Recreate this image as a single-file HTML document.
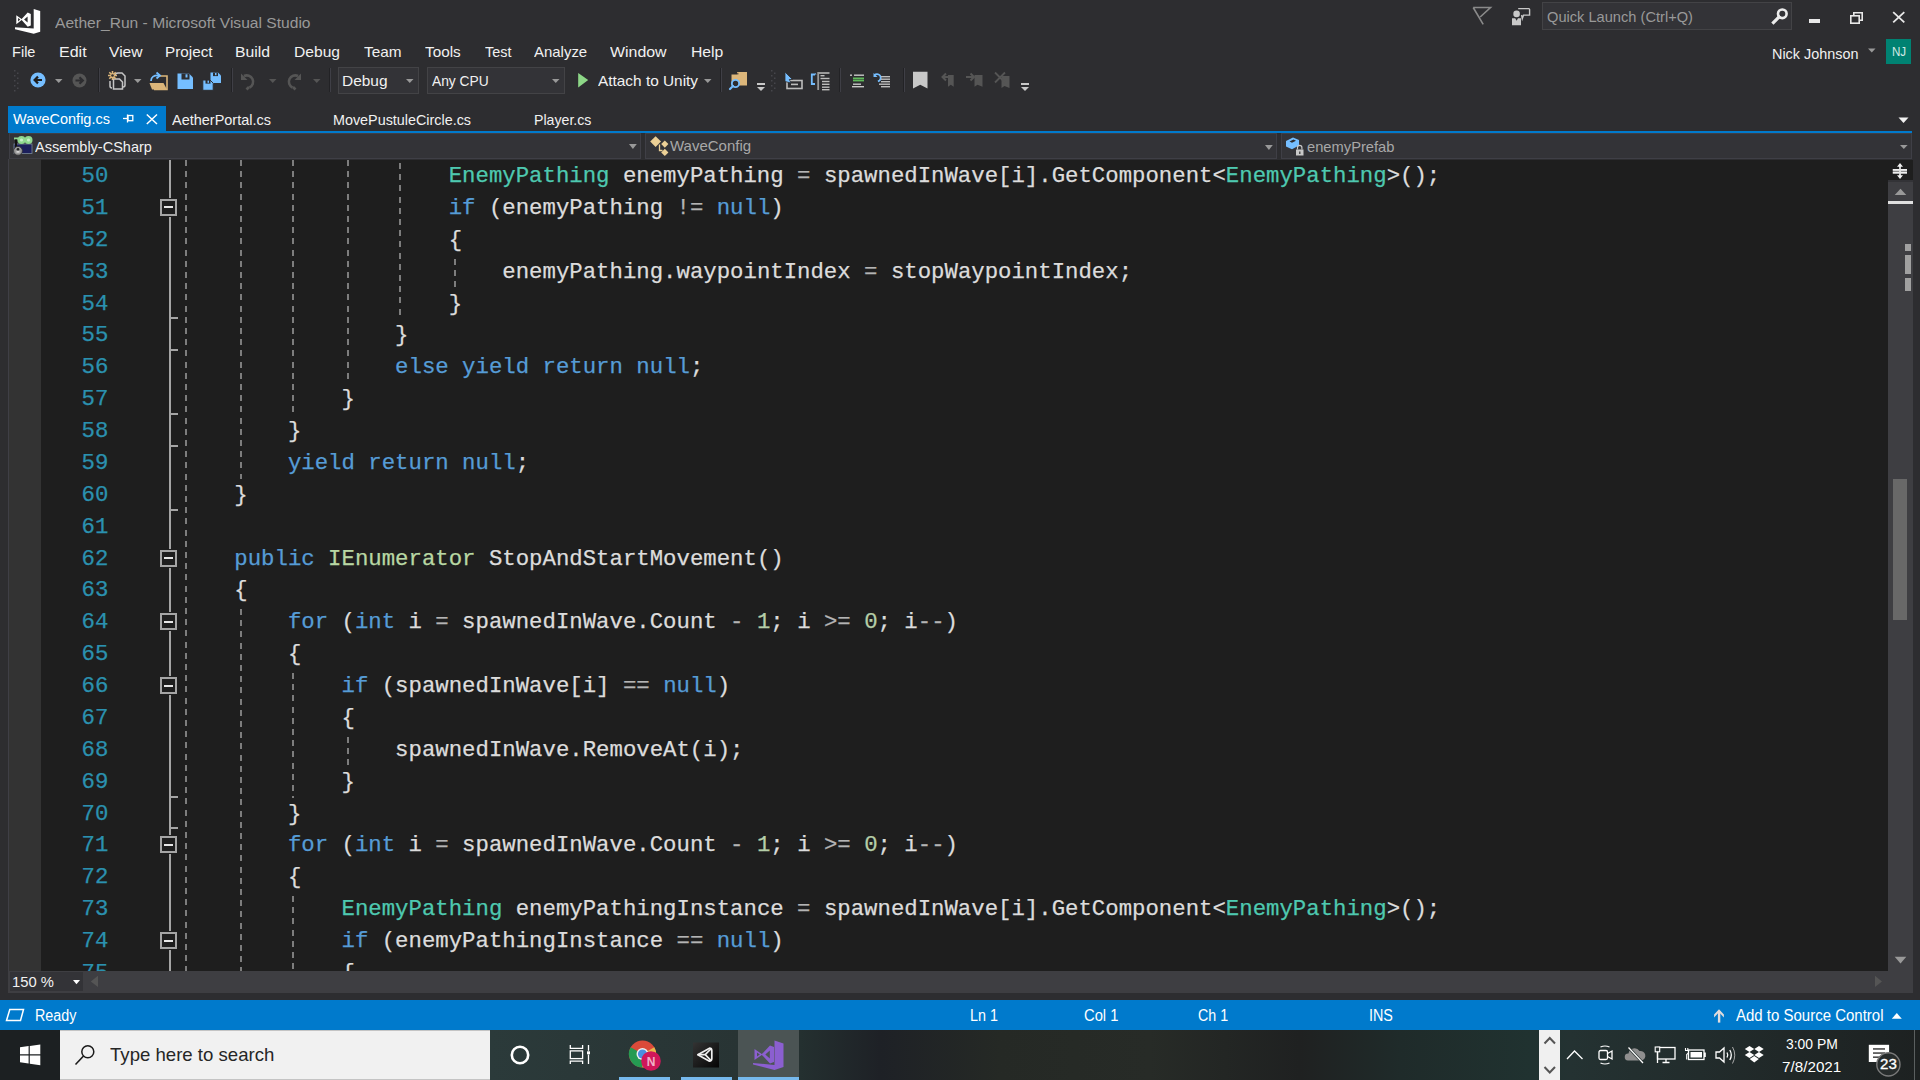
<!DOCTYPE html>
<html><head><meta charset="utf-8"><style>
*{margin:0;padding:0;box-sizing:border-box}
html,body{width:1920px;height:1080px;overflow:hidden;background:#2d2d30;font-family:"Liberation Sans",sans-serif;color:#f1f1f1}
.a{position:absolute}
.t{position:absolute;white-space:pre;line-height:1;transform-origin:0 0}
svg{position:absolute;overflow:visible}
#code{left:41px;top:160px;width:1847px;height:811px;background:#1e1e1e;overflow:hidden}
.ln,.cl{position:absolute;font-family:"Liberation Mono",monospace;font-size:22.33px;letter-spacing:0px;line-height:31.875px;height:31.875px;white-space:pre}
.ln{left:0;width:67.3px;text-align:right;color:#2b91af}
.cl{color:#dcdcdc}
.ln,.cl{-webkit-text-stroke:0.25px currentColor}
.k{color:#569cd6}.ty{color:#4ec9b0}.if{color:#b8d7a3}.n{color:#b5cea8}.o{color:#b4b4b4}
.g{position:absolute;width:2px;background:repeating-linear-gradient(to bottom,#7d7d7d 0,#7d7d7d 6px,transparent 6px,transparent 11.2px)}
.ol{position:absolute;left:128px;width:2px;background:#a5a5a5}
.box{position:absolute;left:119px;width:17px;height:17px;border:2px solid #a5a5a5;background:#1e1e1e;box-shadow:0 0 0 1px #1e1e1e}
.box:after{content:"";position:absolute;left:2px;top:5.5px;width:9px;height:2px;background:#e6e6e6}
.tick{position:absolute;left:128px;width:9px;height:2px;background:#a5a5a5}
</style></head>
<body>
<svg style="left:10px;top:4px" width="32" height="32" viewBox="0 0 32 32"><g fill="#fff" fill-rule="evenodd"><path d="M23.7 5 L30.2 7 L30.2 27.7 L23.7 29.8 L5 25.2 L5 23.3 L23.7 24.6 Z"/><path d="M6.3 11.3 L12.3 15.5 L6.3 20.2 Z M8.1 13.9 L10.2 15.6 L8.1 17.4 Z"/><path d="M11.2 15.5 L17.7 8.6 L20.8 9.9 L20.8 21.4 L17.7 22.8 Z M14.1 15.6 L17.6 12.6 L17.6 18.6 Z"/></g></svg>
<div class="t" style="left:54.57px;top:14.88px;font-size:15.5px;color:#999999;transform:scaleX(1.0066);">Aether_Run - Microsoft Visual Studio</div>
<svg style="left:1470px;top:4px" width="24" height="24" viewBox="0 0 24 24"><path d="M3.2 3.5 H20.5 L10.2 13 M3.2 3.5 L13.2 20.4" fill="none" stroke="#8a8a8a" stroke-width="1.6" stroke-linejoin="miter"/></svg>
<svg style="left:1508px;top:4px" width="26" height="24" viewBox="0 0 26 24"><path d="M10.2 4.6 H20.8 Q21.6 4.6 21.6 5.4 V11.1 H15.6 L14.3 14.6 L13.6 11" fill="none" stroke="#c8c8c8" stroke-width="1.4"/><circle cx="8.6" cy="9.9" r="3.3" fill="#c8c8c8"/><path d="M4 14.3 H7.2 L8.6 16.8 L10 14.3 H13 V21.3 H4 Z" fill="#c8c8c8"/></svg>
<div class="a" style="left:1542px;top:2px;width:250px;height:28px;background:#333337;border:1px solid #434346"></div>
<div class="t" style="left:1547.13px;top:10.23px;font-size:14.5px;color:#999999;transform:scaleX(1.0090);">Quick Launch (Ctrl+Q)</div>
<svg style="left:1770px;top:7px" width="20" height="18" viewBox="0 0 20 18"><circle cx="12.3" cy="6.8" r="4.3" fill="none" stroke="#ececec" stroke-width="2.6"/><path d="M9 10 L3.5 15.5" stroke="#ececec" stroke-width="3.2" stroke-linecap="square"/></svg>
<div class="a" style="left:1809px;top:19px;width:11px;height:4px;background:#e8e8e8;"></div>
<svg style="left:1848px;top:10px" width="18" height="16" viewBox="0 0 18 16"><rect x="2.8" y="5.8" width="8.4" height="7.4" fill="none" stroke="#e8e8e8" stroke-width="1.6"/><path d="M5.8 5.8 V2.8 H14.2 V10.2 H11.2" fill="none" stroke="#e8e8e8" stroke-width="1.6"/></svg>
<svg style="left:1890px;top:10px" width="18" height="16" viewBox="0 0 18 16"><path d="M3.2 2.2 L14.3 12.3 M14.3 2.2 L3.2 12.3" stroke="#e8e8e8" stroke-width="1.8"/></svg>
<div class="t" style="left:1771.61px;top:46.67px;font-size:14.8px;color:#f1f1f1;transform:scaleX(0.9731);">Nick Johnson</div>
<svg style="left:1866px;top:47px" width="12" height="8" viewBox="0 0 12 8"><path d="M2 1.5 H9.5 L5.75 5.5 Z" fill="#999"/></svg>
<div class="a" style="left:1886px;top:39px;width:25px;height:25px;background:#008272;"></div>
<div class="t" style="left:1891.55px;top:45.62px;font-size:12.5px;color:#d4ebe6;transform:scaleX(0.9265);">NJ</div>
<div class="t" style="left:11.60px;top:44.10px;font-size:15px;color:#f1f1f1;transform:scaleX(0.9704);">File</div>
<div class="t" style="left:59.10px;top:44.10px;font-size:15px;color:#f1f1f1;transform:scaleX(1.0674);">Edit</div>
<div class="t" style="left:109.10px;top:44.10px;font-size:15px;color:#f1f1f1;transform:scaleX(1.0407);">View</div>
<div class="t" style="left:165.10px;top:44.10px;font-size:15px;color:#f1f1f1;transform:scaleX(1.0180);">Project</div>
<div class="t" style="left:235.10px;top:44.10px;font-size:15px;color:#f1f1f1;transform:scaleX(1.0515);">Build</div>
<div class="t" style="left:294.10px;top:44.10px;font-size:15px;color:#f1f1f1;transform:scaleX(1.0421);">Debug</div>
<div class="t" style="left:364.10px;top:44.10px;font-size:15px;color:#f1f1f1;transform:scaleX(1.0231);">Team</div>
<div class="t" style="left:424.90px;top:44.10px;font-size:15px;color:#f1f1f1;transform:scaleX(1.0199);">Tools</div>
<div class="t" style="left:484.90px;top:44.10px;font-size:15px;color:#f1f1f1;transform:scaleX(0.9610);">Test</div>
<div class="t" style="left:534.10px;top:44.10px;font-size:15px;color:#f1f1f1;transform:scaleX(0.9966);">Analyze</div>
<div class="t" style="left:609.90px;top:44.10px;font-size:15px;color:#f1f1f1;transform:scaleX(1.0606);">Window</div>
<div class="t" style="left:690.80px;top:44.10px;font-size:15px;color:#f1f1f1;transform:scaleX(1.0491);">Help</div>
<svg style="left:14px;top:69.5px" width="6" height="23" viewBox="0 0 6 23"><rect x="0" y="0.0" width="1.5" height="1.5" fill="#46464b"/><rect x="3" y="2.5" width="1.5" height="1.5" fill="#46464b"/><rect x="0" y="5.0" width="1.5" height="1.5" fill="#46464b"/><rect x="3" y="7.5" width="1.5" height="1.5" fill="#46464b"/><rect x="0" y="10.0" width="1.5" height="1.5" fill="#46464b"/><rect x="3" y="12.5" width="1.5" height="1.5" fill="#46464b"/><rect x="0" y="15.0" width="1.5" height="1.5" fill="#46464b"/><rect x="3" y="17.5" width="1.5" height="1.5" fill="#46464b"/><rect x="0" y="20.0" width="1.5" height="1.5" fill="#46464b"/></svg>
<svg style="left:30px;top:72px" width="16" height="16" viewBox="0 0 16 16"><circle cx="8" cy="8" r="7.6" fill="#75beff"/><path d="M12 8 H5 M8 4.6 L4.6 8 L8 11.4" fill="none" stroke="#1e1e1e" stroke-width="2.2"/></svg>
<svg style="left:55px;top:79px" width="8.5" height="5" viewBox="0 0 8.5 5"><path d="M0 0 H7.5 L3.75 4 Z" fill="#999999"/></svg>
<svg style="left:71.5px;top:72.5px" width="16" height="16" viewBox="0 0 16 16"><circle cx="7.5" cy="7.5" r="7" fill="#555555"/><path d="M3.5 7.5 H10.5 M7.5 4.3 L10.8 7.5 L7.5 10.7" fill="none" stroke="#2d2d30" stroke-width="2.2"/></svg>
<div class="a" style="left:98px;top:68px;width:1px;height:24px;background:#222225;"></div><div class="a" style="left:99px;top:68px;width:1px;height:24px;background:#3f3f46;"></div>
<svg style="left:106px;top:70px" width="22" height="21" viewBox="0 0 22 21"><path d="M9 6 a3 3 0 0 1 3 -3 h4 l3 3 v9 a2 2 0 0 1 -2 2" fill="none" stroke="#c5c5c5" stroke-width="1.5"/><path d="M7.5 9 h6 l3 3 v7 h-9 z" fill="#2d2d30" stroke="#c5c5c5" stroke-width="1.5"/><path d="M4 11 v5 a2 2 0 0 0 2 2" fill="none" stroke="#c5c5c5" stroke-width="1.5"/><g stroke="#dcb67a" stroke-width="1.6"><path d="M6.5 1 V10 M2 5.5 H11 M3.3 2.3 L9.7 8.7 M9.7 2.3 L3.3 8.7"/></g><circle cx="6.5" cy="5.5" r="1.3" fill="#2d2d30"/></svg>
<svg style="left:134px;top:79px" width="8.5" height="5" viewBox="0 0 8.5 5"><path d="M0 0 H7.5 L3.75 4 Z" fill="#999999"/></svg>
<svg style="left:148px;top:70px" width="21" height="22" viewBox="0 0 21 22"><path d="M11 6 h8 v13.5 h-13" fill="none" stroke="#dcb67a" stroke-width="1.6"/><path d="M1.5 13 h14 l3.5 6.5 h-15 z" fill="#dcb67a"/><path d="M3 11 q0 -6 8 -5.5" fill="none" stroke="#75beff" stroke-width="1.8"/><path d="M8.5 2.5 L12 5.5 L8.5 8.5" fill="none" stroke="#75beff" stroke-width="1.8"/></svg>
<svg style="left:176.5px;top:72.5px" width="17" height="17" viewBox="0 0 17 17"><path d="M0.5 0.5 H12 L16 4.5 V16 H0.5 Z" fill="#75beff"/><rect x="4.5" y="0.5" width="8" height="6" fill="#2d2d30"/><rect x="8.5" y="1.3" width="2" height="3.2" fill="#75beff"/></svg>
<svg style="left:202px;top:71.5px" width="20" height="19" viewBox="0 0 20 19"><path d="M8.5 0.5 H16 L19 3.5 V11 H8.5 Z" fill="#75beff"/><rect x="11" y="0.5" width="5" height="3.6" fill="#2d2d30"/><rect x="13" y="1" width="1.5" height="2.2" fill="#75beff"/><path d="M0.8 8 H8 L11.2 11.2 V18.3 H0.8 Z" fill="#75beff" stroke="#2d2d30" stroke-width="1"/><rect x="3.5" y="8" width="5" height="3.6" fill="#2d2d30"/><rect x="5.5" y="8.6" width="1.5" height="2.2" fill="#75beff"/></svg>
<div class="a" style="left:231px;top:68px;width:1px;height:24px;background:#222225;"></div><div class="a" style="left:232px;top:68px;width:1px;height:24px;background:#3f3f46;"></div>
<svg style="left:240px;top:70px" width="18" height="20" viewBox="0 0 18 20"><path d="M4 6 A6.3 6.3 0 1 1 9.5 17.5" fill="none" stroke="#555555" stroke-width="2.6"/><path d="M1 3.5 V10 H7.5 Z" fill="#555555"/><path d="M9 17 L6.5 19.5" stroke="#555555" stroke-width="2.6"/></svg>
<svg style="left:269px;top:79px" width="8.5" height="5" viewBox="0 0 8.5 5"><path d="M0 0 H7.5 L3.75 4 Z" fill="#555555"/></svg>
<svg style="left:284px;top:70px" width="18" height="20" viewBox="0 0 18 20"><path d="M14 6 A6.3 6.3 0 1 0 8.5 17.5" fill="none" stroke="#555555" stroke-width="2.6"/><path d="M17 3.5 V10 H10.5 Z" fill="#555555"/><path d="M9 17 L11.5 19.5" stroke="#555555" stroke-width="2.6"/></svg>
<svg style="left:313px;top:79px" width="8.5" height="5" viewBox="0 0 8.5 5"><path d="M0 0 H7.5 L3.75 4 Z" fill="#555555"/></svg>
<div class="a" style="left:329px;top:68px;width:1px;height:24px;background:#222225;"></div><div class="a" style="left:330px;top:68px;width:1px;height:24px;background:#3f3f46;"></div>
<div class="a" style="left:338px;top:67px;width:81px;height:27px;background:#333337;border:1px solid #434346"></div>
<div class="t" style="left:342.10px;top:73.05px;font-size:15px;color:#f1f1f1;transform:scaleX(1.0304);">Debug</div>
<svg style="left:406px;top:79px" width="8.5" height="5" viewBox="0 0 8.5 5"><path d="M0 0 H7.5 L3.75 4 Z" fill="#999999"/></svg>
<div class="a" style="left:427px;top:67px;width:138px;height:27px;background:#333337;border:1px solid #434346"></div>
<div class="t" style="left:431.50px;top:73.10px;font-size:15px;color:#f1f1f1;transform:scaleX(0.9188);">Any CPU</div>
<svg style="left:552px;top:79px" width="8.5" height="5" viewBox="0 0 8.5 5"><path d="M0 0 H7.5 L3.75 4 Z" fill="#999999"/></svg>
<svg style="left:577px;top:72px" width="12" height="17" viewBox="0 0 12 17"><path d="M1.2 1 L11.2 8 L1.2 15.5 Z" fill="#8dd787"/></svg>
<div class="t" style="left:598.30px;top:73.10px;font-size:15px;color:#f1f1f1;transform:scaleX(1.0255);">Attach to Unity</div>
<svg style="left:704.2px;top:79px" width="8.5" height="5" viewBox="0 0 8.5 5"><path d="M0 0 H7.5 L3.75 4 Z" fill="#999999"/></svg>
<div class="a" style="left:720px;top:68px;width:1px;height:24px;background:#222225;"></div><div class="a" style="left:721px;top:68px;width:1px;height:24px;background:#3f3f46;"></div>
<svg style="left:728px;top:70px" width="22" height="21" viewBox="0 0 22 21"><path d="M3.5 4.5 H9 V2 H19 V15.5 H3.5 Z" fill="#dcb67a"/><path d="M9.8 4.5 V2.8" stroke="#2d2d30"/><circle cx="7.5" cy="13.5" r="3.6" fill="#2d2d30" stroke="#75beff" stroke-width="1.8"/><path d="M5 16 L2 19" stroke="#75beff" stroke-width="2.2" stroke-linecap="round"/></svg>
<div class="a" style="left:757px;top:83px;width:8px;height:2px;background:#c8c8c8;"></div>
<svg style="left:757px;top:87px" width="9" height="5" viewBox="0 0 9 5"><path d="M0 0 H8 L4.0 4 Z" fill="#c8c8c8"/></svg>
<svg style="left:770.5px;top:70px" width="6" height="23" viewBox="0 0 6 23"><rect x="0" y="0.0" width="1.5" height="1.5" fill="#46464b"/><rect x="3" y="2.5" width="1.5" height="1.5" fill="#46464b"/><rect x="0" y="5.0" width="1.5" height="1.5" fill="#46464b"/><rect x="3" y="7.5" width="1.5" height="1.5" fill="#46464b"/><rect x="0" y="10.0" width="1.5" height="1.5" fill="#46464b"/><rect x="3" y="12.5" width="1.5" height="1.5" fill="#46464b"/><rect x="0" y="15.0" width="1.5" height="1.5" fill="#46464b"/><rect x="3" y="17.5" width="1.5" height="1.5" fill="#46464b"/><rect x="0" y="20.0" width="1.5" height="1.5" fill="#46464b"/></svg>
<svg style="left:784px;top:71px" width="20" height="19" viewBox="0 0 20 19"><rect x="3" y="9.5" width="15" height="8" fill="none" stroke="#bdbdbd" stroke-width="1.6"/><rect x="7" y="12.6" width="7" height="1.6" fill="#bdbdbd"/><path d="M1 1 L8.5 8.5 L5.3 8.5 L7 12 L1 10.5 Z" fill="#75beff" stroke="#2d2d30" stroke-width="0.8"/></svg>
<svg style="left:810px;top:71px" width="21" height="20" viewBox="0 0 21 20"><path d="M5 3.5 H1.8 V13 H5" fill="none" stroke="#75beff" stroke-width="1.8"/><path d="M4.5 3.5 H6.5 L5.5 2 Z" fill="#75beff"/><path d="M8.2 19 V2 H19.5" fill="none" stroke="#9a9a9a" stroke-width="1.8"/><g fill="#bdbdbd"><rect x="10.5" y="4" width="4" height="1.4"/><rect x="10.5" y="6.8" width="9" height="1.4"/><rect x="12" y="9.8" width="7.5" height="1.4"/><rect x="12" y="12.6" width="7.5" height="1.4"/><rect x="12" y="15.5" width="7.5" height="1.4"/><rect x="12" y="18" width="7.5" height="1.4"/></g></svg>
<div class="a" style="left:839px;top:68px;width:1px;height:24px;background:#222225;"></div><div class="a" style="left:840px;top:68px;width:1px;height:24px;background:#3f3f46;"></div>
<svg style="left:849px;top:73px" width="16" height="15" viewBox="0 0 16 15"><g fill="#c8c8c8"><rect x="1" y="1.5" width="2" height="1.4"/><rect x="5" y="1.5" width="10" height="1.4"/><rect x="4" y="10.5" width="8" height="1.4"/><rect x="3" y="13" width="12" height="1.4"/></g><rect x="4" y="4.5" width="11" height="2" fill="#5fba5a"/><rect x="4" y="7" width="11" height="1.4" fill="#5fba5a"/></svg>
<svg style="left:873px;top:72px" width="19" height="17" viewBox="0 0 19 17"><path d="M1.5 3 A3.6 3.6 0 1 1 6.5 8.5 L5 9.5" fill="none" stroke="#75beff" stroke-width="1.8"/><path d="M0.5 1 V5 H4.5 Z" fill="#75beff"/><g fill="#bdbdbd"><rect x="8" y="4" width="9" height="1.4"/><rect x="8" y="6.5" width="9" height="1.4"/><rect x="8" y="9" width="9" height="1.4"/><rect x="6" y="11.5" width="11" height="1.4"/><rect x="8" y="14" width="9" height="1.4"/></g></svg>
<div class="a" style="left:903px;top:68px;width:1px;height:24px;background:#222225;"></div><div class="a" style="left:904px;top:68px;width:1px;height:24px;background:#3f3f46;"></div>
<svg style="left:912px;top:71px" width="17" height="19" viewBox="0 0 17 19"><path d="M1 0.8 H15.5 V17.5 L8.25 13.8 L1 17.5 Z" fill="#c8c8c8"/></svg>
<svg style="left:940px;top:71px" width="18" height="18" viewBox="0 0 18 18"><path d="M8 2 V15.8 L10.8 13.8 L13.7 15.8 V4 H8" fill="#555555"/><path d="M9 6 H3 M6 2.5 L2.5 6 L6 9.5" fill="none" stroke="#555555" stroke-width="2"/></svg>
<svg style="left:965px;top:71px" width="19" height="18" viewBox="0 0 19 18"><path d="M9.5 4 V15.8 L12.5 13.8 L17.5 15.8 V4 Z" fill="#555555"/><path d="M1 6 H8 M5.5 2.5 L9 6 L5.5 9.5" fill="none" stroke="#555555" stroke-width="2"/></svg>
<svg style="left:993px;top:71px" width="18" height="19" viewBox="0 0 18 19"><path d="M8.5 5 V17 L11.5 15 L16.5 17 V5 Z" fill="#555555"/><path d="M2 1.5 L12 11.5 M12 1.5 L2 11.5" stroke="#555555" stroke-width="1.8"/></svg>
<div class="a" style="left:1021px;top:83px;width:8px;height:2px;background:#c8c8c8;"></div>
<svg style="left:1021px;top:87px" width="9" height="5" viewBox="0 0 9 5"><path d="M0 0 H8 L4.0 4 Z" fill="#c8c8c8"/></svg>
<div class="a" style="left:8px;top:106px;width:158px;height:25px;background:#007acc;"></div>
<div class="a" style="left:8px;top:131px;width:1904px;height:2px;background:#007acc;"></div>
<div class="t" style="left:12.63px;top:112.33px;font-size:14.5px;color:#ffffff;transform:scaleX(0.9998);">WaveConfig.cs</div>
<svg style="left:122px;top:113px" width="12" height="11" viewBox="0 0 12 11"><path d="M1 5.5 H5.5" stroke="#fff" stroke-width="1.3"/><path d="M5.5 1.5 V9.5" stroke="#fff" stroke-width="1.3"/><rect x="6" y="2.5" width="4.8" height="5.2" fill="none" stroke="#fff" stroke-width="1.3"/></svg>
<svg style="left:145px;top:113px" width="14" height="12" viewBox="0 0 14 12"><path d="M1.8 1.5 L12 11 M12 1.5 L1.8 11" stroke="#fff" stroke-width="1.5"/></svg>
<div class="t" style="left:171.63px;top:112.53px;font-size:14.5px;color:#f1f1f1;transform:scaleX(0.9980);">AetherPortal.cs</div>
<div class="t" style="left:333.33px;top:112.53px;font-size:14.5px;color:#f1f1f1;transform:scaleX(0.9901);">MovePustuleCircle.cs</div>
<div class="t" style="left:534.13px;top:112.53px;font-size:14.5px;color:#f1f1f1;transform:scaleX(0.9757);">Player.cs</div>
<svg style="left:1898px;top:117px" width="12" height="7" viewBox="0 0 12 7"><path d="M0.5 0.5 H10.5 L5.5 6 Z" fill="#f1f1f1"/></svg>
<div class="a" style="left:9px;top:133px;width:632px;height:26px;background:#333337;border:1px solid #3f3f46"></div>
<div class="a" style="left:645px;top:133px;width:632px;height:26px;background:#333337;border:1px solid #3f3f46"></div>
<div class="a" style="left:1281px;top:133px;width:631px;height:26px;background:#333337;border:1px solid #3f3f46"></div>
<svg style="left:13px;top:135px" width="21" height="22" viewBox="0 0 21 22"><rect x="1" y="9" width="18" height="9.5" fill="#1c1f5c" stroke="#7a8a9a" stroke-width="0.8"/><g fill="#8fd88f"><circle cx="8.5" cy="5" r="4"/><circle cx="15.5" cy="5" r="4"/><rect x="1" y="2.5" width="4" height="2"/></g><g fill="#c8eec8"><circle cx="8.5" cy="5" r="1.6"/><circle cx="15.5" cy="5" r="1.6"/></g><rect x="2" y="4.5" width="2" height="10" fill="#111"/><circle cx="5" cy="15.8" r="4.4" fill="#9a9a9a" stroke="#2d2d30" stroke-width="0.8"/><circle cx="5" cy="14.3" r="1.3" fill="#222"/><rect x="3.5" y="16.3" width="3" height="1.2" fill="#eee"/></svg>
<div class="t" style="left:34.53px;top:140.03px;font-size:14.5px;color:#f1f1f1;transform:scaleX(1.0001);">Assembly-CSharp</div>
<svg style="left:628.8px;top:144px" width="8.8" height="6" viewBox="0 0 8.8 6"><path d="M0 0 H7.8 L3.9 5 Z" fill="#999999"/></svg>
<svg style="left:648px;top:135px" width="22" height="21" viewBox="0 0 22 21"><g fill="#ecd096"><path d="M7.6 1.2 L13 6.6 L7.6 12 L2.2 6.6 Z"/><path d="M16.8 5.5 L20.4 9.1 L16.8 12.7 L13.2 9.1 Z"/><path d="M16.8 13.8 L20.4 17.4 L16.8 21 L13.2 17.4 Z"/></g><path d="M11.5 9.5 V15.5 H14.5" fill="none" stroke="#ecd096" stroke-width="1.3"/></svg>
<div class="t" style="left:670.13px;top:139.43px;font-size:14.5px;color:#a8a8a8;transform:scaleX(1.0337);">WaveConfig</div>
<svg style="left:1265px;top:144.5px" width="8.8" height="6" viewBox="0 0 8.8 6"><path d="M0 0 H7.8 L3.9 5 Z" fill="#999999"/></svg>
<svg style="left:1285px;top:136px" width="21" height="21" viewBox="0 0 21 21"><path d="M1 5 L8 1.5 L14 4 L14 9.5 L7 13.2 L1 10.5 Z" fill="#75beff"/><path d="M4.5 5.5 L8.5 3.5 L11 4.8 L7 6.8 Z" fill="#2d2d30"/><rect x="11" y="13.5" width="7.5" height="6" fill="#c8c8c8"/><path d="M12.5 13.5 V11.5 a2.2 2.2 0 0 1 4.4 0 V13.5" fill="none" stroke="#c8c8c8" stroke-width="1.2"/><rect x="14.2" y="15.5" width="1.2" height="2.5" fill="#333"/></svg>
<div class="t" style="left:1306.83px;top:139.63px;font-size:14.5px;color:#a8a8a8;transform:scaleX(1.0142);">enemyPrefab</div>
<svg style="left:1900px;top:145px" width="8.6" height="5" viewBox="0 0 8.6 5"><path d="M0 0 H7.6 L3.8 4 Z" fill="#999999"/></svg>
<div class="a" style="left:8px;top:159px;width:1px;height:834px;background:#3f3f46;"></div>
<div class="a" style="left:9px;top:159px;width:32px;height:812px;background:#333333;"></div>
<div class="a" id="code">
<div class="g" style="left:144px;top:0.00px;height:811.00px"></div>
<div class="g" style="left:199px;top:0.00px;height:318.75px"></div>
<div class="g" style="left:199px;top:449.25px;height:361.75px"></div>
<div class="g" style="left:251px;top:0.00px;height:255.00px"></div>
<div class="g" style="left:251px;top:513.00px;height:124.50px"></div>
<div class="g" style="left:251px;top:736.12px;height:74.88px"></div>
<div class="g" style="left:306px;top:0.00px;height:223.12px"></div>
<div class="g" style="left:306px;top:576.75px;height:28.88px"></div>
<div class="g" style="left:358px;top:3.00px;height:156.38px"></div>
<div class="g" style="left:413px;top:98.62px;height:28.88px"></div>
<div class="ol" style="top:0;height:811px"></div>
<div class="tick" style="top:157.38px"></div>
<div class="tick" style="top:189.25px"></div>
<div class="tick" style="top:253.00px"></div>
<div class="tick" style="top:284.88px"></div>
<div class="tick" style="top:348.62px"></div>
<div class="tick" style="top:635.50px"></div>
<div class="tick" style="top:667.38px"></div>
<div class="box" style="top:38.88px"></div>
<div class="box" style="top:389.50px"></div>
<div class="box" style="top:453.25px"></div>
<div class="box" style="top:517.00px"></div>
<div class="box" style="top:676.38px"></div>
<div class="box" style="top:772.00px"></div>
<div class="ln" style="top:1.00px">50</div>
<div class="cl" style="top:1.00px;left:407.70px"><span class=ty>EnemyPathing</span> enemyPathing <span class=o>=</span> spawnedInWave[i].GetComponent&lt;<span class=ty>EnemyPathing</span>&gt;();</div>
<div class="ln" style="top:32.88px">51</div>
<div class="cl" style="top:32.88px;left:407.70px"><span class=k>if</span> (enemyPathing <span class=o>!=</span> <span class=k>null</span>)</div>
<div class="ln" style="top:64.75px">52</div>
<div class="cl" style="top:64.75px;left:407.70px">{</div>
<div class="ln" style="top:96.62px">53</div>
<div class="cl" style="top:96.62px;left:461.30px">enemyPathing.waypointIndex <span class=o>=</span> stopWaypointIndex;</div>
<div class="ln" style="top:128.50px">54</div>
<div class="cl" style="top:128.50px;left:407.70px">}</div>
<div class="ln" style="top:160.38px">55</div>
<div class="cl" style="top:160.38px;left:354.10px">}</div>
<div class="ln" style="top:192.25px">56</div>
<div class="cl" style="top:192.25px;left:354.10px"><span class=k>else</span> <span class=k>yield</span> <span class=k>return</span> <span class=k>null</span>;</div>
<div class="ln" style="top:224.12px">57</div>
<div class="cl" style="top:224.12px;left:300.50px">}</div>
<div class="ln" style="top:256.00px">58</div>
<div class="cl" style="top:256.00px;left:246.90px">}</div>
<div class="ln" style="top:287.88px">59</div>
<div class="cl" style="top:287.88px;left:246.90px"><span class=k>yield</span> <span class=k>return</span> <span class=k>null</span>;</div>
<div class="ln" style="top:319.75px">60</div>
<div class="cl" style="top:319.75px;left:193.30px">}</div>
<div class="ln" style="top:351.62px">61</div>
<div class="ln" style="top:383.50px">62</div>
<div class="cl" style="top:383.50px;left:193.30px"><span class=k>public</span> <span class=if>IEnumerator</span> StopAndStartMovement()</div>
<div class="ln" style="top:415.38px">63</div>
<div class="cl" style="top:415.38px;left:193.30px">{</div>
<div class="ln" style="top:447.25px">64</div>
<div class="cl" style="top:447.25px;left:246.90px"><span class=k>for</span> (<span class=k>int</span> i <span class=o>=</span> spawnedInWave.Count <span class=o>-</span> <span class=n>1</span>; i <span class=o>&gt;=</span> <span class=n>0</span>; i<span class=o>--</span>)</div>
<div class="ln" style="top:479.12px">65</div>
<div class="cl" style="top:479.12px;left:246.90px">{</div>
<div class="ln" style="top:511.00px">66</div>
<div class="cl" style="top:511.00px;left:300.50px"><span class=k>if</span> (spawnedInWave[i] <span class=o>==</span> <span class=k>null</span>)</div>
<div class="ln" style="top:542.88px">67</div>
<div class="cl" style="top:542.88px;left:300.50px">{</div>
<div class="ln" style="top:574.75px">68</div>
<div class="cl" style="top:574.75px;left:354.10px">spawnedInWave.RemoveAt(i);</div>
<div class="ln" style="top:606.62px">69</div>
<div class="cl" style="top:606.62px;left:300.50px">}</div>
<div class="ln" style="top:638.50px">70</div>
<div class="cl" style="top:638.50px;left:246.90px">}</div>
<div class="ln" style="top:670.38px">71</div>
<div class="cl" style="top:670.38px;left:246.90px"><span class=k>for</span> (<span class=k>int</span> i <span class=o>=</span> spawnedInWave.Count <span class=o>-</span> <span class=n>1</span>; i <span class=o>&gt;=</span> <span class=n>0</span>; i<span class=o>--</span>)</div>
<div class="ln" style="top:702.25px">72</div>
<div class="cl" style="top:702.25px;left:246.90px">{</div>
<div class="ln" style="top:734.12px">73</div>
<div class="cl" style="top:734.12px;left:300.50px"><span class=ty>EnemyPathing</span> enemyPathingInstance <span class=o>=</span> spawnedInWave[i].GetComponent&lt;<span class=ty>EnemyPathing</span>&gt;();</div>
<div class="ln" style="top:766.00px">74</div>
<div class="cl" style="top:766.00px;left:300.50px"><span class=k>if</span> (enemyPathingInstance <span class=o>==</span> <span class=k>null</span>)</div>
<div class="ln" style="top:797.88px">75</div>
<div class="cl" style="top:797.88px;left:300.50px">{</div>
</div>
<div class="a" style="left:1888px;top:160px;width:25px;height:20px;background:#1e1e1e;"></div>
<svg style="left:1888px;top:160px" width="25" height="20" viewBox="0 0 25 20"><rect x="4.8" y="9" width="14.2" height="4.6" fill="#777"/><rect x="4.8" y="9" width="14.2" height="1.8" fill="#f0f0f0"/><rect x="4.8" y="11.8" width="14.2" height="1.8" fill="#f0f0f0"/><rect x="11.1" y="4.5" width="1.8" height="12" fill="#e0e0e0"/><path d="M9 6.8 L12 3 L15 6.8 Z M9 15.2 L12 19 L15 15.2 Z" fill="#f0f0f0"/></svg>
<div class="a" style="left:1888px;top:180px;width:25px;height:2px;background:#333337;"></div>
<div class="a" style="left:1888px;top:182px;width:25px;height:811px;background:#3e3e42;"></div>
<svg style="left:1894px;top:188px" width="13" height="8" viewBox="0 0 13 8"><path d="M0.7 7 L6.5 0.8 L12.3 7 Z" fill="#999999"/></svg>
<div class="a" style="left:1888px;top:201px;width:25px;height:3px;background:#e0e0e0;"></div>
<div class="a" style="left:1905px;top:244px;width:6px;height:7px;background:#a0a0a0;"></div>
<div class="a" style="left:1905px;top:255px;width:6px;height:19px;background:#a0a0a0;"></div>
<div class="a" style="left:1905px;top:277.5px;width:6px;height:13.5px;background:#a0a0a0;"></div>
<div class="a" style="left:1893px;top:479px;width:14px;height:141px;background:#686868;"></div>
<svg style="left:1894px;top:956px" width="13" height="9" viewBox="0 0 13 9"><path d="M0.7 0.8 L12.3 0.8 L6.5 7.5 Z" fill="#999999"/></svg>
<div class="a" style="left:8px;top:971px;width:1880px;height:22px;background:#3e3e42;"></div>
<div class="a" style="left:10px;top:972px;width:73px;height:19px;background:#333337;"></div>
<div class="t" style="left:12.06px;top:974.95px;font-size:14px;color:#f1f1f1;transform:scaleX(1.0547);">150 %</div>
<svg style="left:73px;top:980px" width="8" height="5.2" viewBox="0 0 8 5.2"><path d="M0 0 H7 L3.5 4.2 Z" fill="#ffffff"/></svg>
<svg style="left:90px;top:975px" width="9" height="13" viewBox="0 0 9 13"><path d="M8 0.8 V12 L0.8 6.4 Z" fill="#555555"/></svg>
<svg style="left:1874px;top:975px" width="9" height="13" viewBox="0 0 9 13"><path d="M1 0.8 V12 L8 6.4 Z" fill="#555555"/></svg>
<div class="a" style="left:0px;top:1000px;width:1920px;height:30px;background:#007acc;"></div>
<svg style="left:4px;top:1007px" width="22" height="16" viewBox="0 0 22 16"><path d="M5.8 2.5 H19.5 L16.5 13.5 H2.5 Z" fill="none" stroke="#ffffff" stroke-width="1.5"/></svg>
<div class="t" style="left:34.55px;top:1007.83px;font-size:15.8px;color:#ffffff;transform:scaleX(0.9072);">Ready</div>
<div class="t" style="left:970.05px;top:1007.83px;font-size:15.8px;color:#ffffff;transform:scaleX(0.9085);">Ln 1</div>
<div class="t" style="left:1084.05px;top:1007.83px;font-size:15.8px;color:#ffffff;transform:scaleX(0.9346);">Col 1</div>
<div class="t" style="left:1197.85px;top:1007.83px;font-size:15.8px;color:#ffffff;transform:scaleX(0.9027);">Ch 1</div>
<div class="t" style="left:1368.55px;top:1007.83px;font-size:15.8px;color:#ffffff;transform:scaleX(0.9086);">INS</div>
<svg style="left:1712px;top:1008px" width="14" height="16" viewBox="0 0 14 16"><path d="M2.1 9.4 L7 4.2 L11.9 9.4 V6.6 L7 1.2 L2.1 6.6 Z" fill="#e2dcdc"/><rect x="5.9" y="3" width="2.4" height="11.6" fill="#e2dcdc"/></svg>
<div class="t" style="left:1736.05px;top:1007.83px;font-size:15.8px;color:#ffffff;transform:scaleX(0.9489);">Add to Source Control</div>
<svg style="left:1891px;top:1012px" width="12" height="8" viewBox="0 0 12 8"><path d="M0.8 6.8 L5.8 1 L10.8 6.8 Z" fill="#ffffff"/></svg>
<div class="a" style="left:0px;top:1030px;width:1920px;height:50px;background:linear-gradient(to right,#1c2022 0px,#1c2022 60px,#2b3a3a 490px,#283434 740px,#243030 800px,#1e2126 880px,#252925 1000px,#272b27 1150px,#1f2121 1300px,#1f2b2a 1400px,#203230 1530px,#243232 1570px,#222c2c 1700px,#1d2121 1920px);"></div>
<svg style="left:19px;top:1044px" width="22" height="22" viewBox="0 0 22 22"><g fill="#fff"><path d="M1 3.3 L9.6 2.1 V10.2 H1 Z"/><path d="M10.8 1.9 L21.3 0.4 V10.2 H10.8 Z"/><path d="M1 11.4 H9.6 V19.5 L1 18.3 Z"/><path d="M10.8 11.4 H21.3 V21.2 L10.8 19.7 Z"/></g></svg>
<div class="a" style="left:60px;top:1030px;width:430px;height:50px;background:#f1f1f1;border-top:1px solid #c4c4c4;border-bottom:1px solid #c4c4c4"></div>
<svg style="left:74px;top:1044px" width="23" height="23" viewBox="0 0 23 23"><circle cx="13.8" cy="7.8" r="6" fill="none" stroke="#1a1a1a" stroke-width="1.5"/><path d="M9.5 12 L1.5 20.5" stroke="#1a1a1a" stroke-width="1.6"/></svg>
<div class="t" style="left:109.69px;top:1046.04px;font-size:18.5px;color:#262626;transform:scaleX(1.0052);">Type here to search</div>
<svg style="left:509px;top:1045px" width="22" height="22" viewBox="0 0 22 22"><circle cx="11" cy="10" r="8.2" fill="none" stroke="#ffffff" stroke-width="2.6"/></svg>
<svg style="left:568px;top:1044px" width="24" height="22" viewBox="0 0 24 22"><g fill="none" stroke="#fff" stroke-width="1.3"><path d="M2.3 1.1 V4.3 H14.6 V1.1"/><rect x="2.3" y="6.9" width="12.3" height="7.7"/><path d="M2.3 20.1 V17.1 H14.6 V20.1"/><path d="M20.5 1.1 V6.8 M20.5 10.6 V20.1"/></g><rect x="19" y="7.3" width="3" height="3" fill="#fff"/></svg>
<svg style="left:628px;top:1039px" width="34" height="31" viewBox="0 0 34 31"><circle cx="14.5" cy="15" r="13.6" fill="#db4a3a"/><path d="M14.5 15 L2.7 8.2 A13.6 13.6 0 0 0 14.5 28.6 Z" fill="#259b52"/><path d="M14.5 15 L26.3 8.2 A13.6 13.6 0 0 1 14.5 28.6 Z" fill="#e8b84a"/><circle cx="14.5" cy="15" r="6" fill="#f1f1f1"/><circle cx="14.5" cy="15" r="4.6" fill="#4a8fe0"/><circle cx="23" cy="22" r="9.8" fill="#d0175a"/><text x="23" y="26.5" font-family="Liberation Sans" font-size="12" font-weight="bold" fill="#f0b0c8" text-anchor="middle">N</text></svg>
<svg style="left:692px;top:1042px" width="28" height="26" viewBox="0 0 28 26"><defs><linearGradient id="ug" x1="0" y1="0" x2="1" y2="1"><stop offset="0" stop-color="#333"/><stop offset="1" stop-color="#050505"/></linearGradient></defs><rect x="1" y="0.5" width="26" height="25" fill="url(#ug)"/><g fill="none" stroke="#f0f0f0" stroke-width="1.7" stroke-linejoin="round"><path d="M5.8 12.7 L17.5 6.2 Q19.8 6.2 19.8 8.8 L19.8 16.6 Q19.8 19.2 17.5 19.2 Z"/><path d="M13.2 12.7 H5.8 M13.2 12.7 L18.8 7 M13.2 12.7 L18.8 18.4"/></g></svg>
<div class="a" style="left:738px;top:1030px;width:61px;height:50px;background:#4b5454;"></div>
<svg style="left:752px;top:1039px" width="34" height="32" viewBox="0 0 34 32"><g fill="#8b5fd0" fill-rule="evenodd"><path d="M22.5 1.5 L31.5 4.5 L31.5 28 L22.5 31 L1 25.5 L1 24 L22.5 26 Z"/><path d="M2.5 10 L10.5 15.5 L2.5 21 Z M5 13.5 L7.8 15.5 L5 17.5 Z"/><path d="M9.5 15.5 L18 6.5 L22 8 L22 23 L18 24.5 Z M13.3 15.5 L17.8 11.5 L17.8 19.5 Z"/></g></svg>
<div class="a" style="left:619px;top:1077px;width:51px;height:3px;background:#76b9ed;"></div>
<div class="a" style="left:681px;top:1077px;width:51px;height:3px;background:#76b9ed;"></div>
<div class="a" style="left:738px;top:1077px;width:61px;height:3px;background:#76b9ed;"></div>
<div class="a" style="left:1539px;top:1030px;width:21px;height:50px;background:#f0f0f0;"></div>
<svg style="left:1543px;top:1036px" width="14" height="10" viewBox="0 0 14 10"><path d="M1.5 7.5 L6.75 2 L12 7.5" fill="none" stroke="#555" stroke-width="2"/></svg>
<svg style="left:1543px;top:1065px" width="14" height="10" viewBox="0 0 14 10"><path d="M1.5 2 L6.75 7.5 L12 2" fill="none" stroke="#555" stroke-width="2"/></svg>
<svg style="left:1566px;top:1049px" width="18" height="12" viewBox="0 0 18 12"><path d="M1 10 L8.5 2 L16.5 10" fill="none" stroke="#fff" stroke-width="1.3"/></svg>
<svg style="left:1597px;top:1045px" width="18" height="20" viewBox="0 0 18 20"><rect x="2" y="5.5" width="8.5" height="9" rx="1.5" fill="none" stroke="#fff" stroke-width="1.3"/><path d="M10.5 8.5 L15 6 V14 L10.5 11.5" fill="none" stroke="#fff" stroke-width="1.3"/><path d="M3.5 2 Q8 0 12.5 2 M3.5 18 Q8 20 12.5 18" fill="none" stroke="#fff" stroke-width="1.2"/></svg>
<svg style="left:1624px;top:1046px" width="23" height="18" viewBox="0 0 23 18"><path d="M4 14.5 A3.5 3.5 0 0 1 4.5 7.5 A6 6 0 0 1 15.5 5 A4.8 4.8 0 0 1 17.5 14.5 Z" fill="#8f8f8f"/><path d="M4.5 1.5 L19 17" stroke="#2a3434" stroke-width="2.6"/><path d="M4.5 1.5 L19 17" stroke="#fff" stroke-width="1.2"/></svg>
<svg style="left:1654px;top:1046px" width="23" height="18" viewBox="0 0 23 18"><rect x="3.5" y="1.5" width="17.5" height="11.5" fill="none" stroke="#fff" stroke-width="1.3"/><path d="M12 13 V16.5 M8.5 16.5 H15.5" stroke="#fff" stroke-width="1.3"/><rect x="1.2" y="1" width="4.5" height="4.8" fill="#2a3434" stroke="#fff" stroke-width="1.1"/><path d="M3.5 5.8 V17" stroke="#fff" stroke-width="1.3"/></svg>
<svg style="left:1684px;top:1047px" width="23" height="15" viewBox="0 0 23 15"><rect x="4.5" y="3" width="15.5" height="9.5" fill="none" stroke="#fff" stroke-width="1.3"/><rect x="6.5" y="5" width="11.5" height="5.5" fill="#fff"/><rect x="20" y="5.5" width="1.8" height="4.5" fill="#fff"/><path d="M1.5 1 V3.5 M3.8 1 V3.5 M1 3.5 H4.5 V6 L2.7 7.5 V12.5" fill="none" stroke="#fff" stroke-width="1.1"/></svg>
<svg style="left:1714px;top:1045px" width="23" height="20" viewBox="0 0 23 20"><path d="M2 7 H5.5 L10 3 V17 L5.5 13 H2 Z" fill="none" stroke="#fff" stroke-width="1.3"/><path d="M13 7.5 Q14.5 10 13 12.5 M15.8 5 Q18.8 10 15.8 15" fill="none" stroke="#fff" stroke-width="1.3"/><path d="M18.5 2 Q23 10 18.5 18.5" fill="none" stroke="#aaa" stroke-width="1"/></svg>
<svg style="left:1744px;top:1045px" width="21" height="19" viewBox="0 0 21 19"><g fill="#fff"><path d="M5.5 1 L10.2 4 L5.5 7 L0.8 4 Z"/><path d="M15 1 L19.7 4 L15 7 L10.3 4 Z"/><path d="M5.5 7 L10.2 10 L5.5 13 L0.8 10 Z"/><path d="M15 7 L19.7 10 L15 13 L10.3 10 Z"/><path d="M10.25 11 L14.8 14 L10.25 17.5 L5.7 14 Z"/></g></svg>
<div class="t" style="left:1785.90px;top:1036.10px;font-size:15px;color:#ffffff;transform:scaleX(0.9269);">3:00 PM</div>
<div class="t" style="left:1782.00px;top:1059.10px;font-size:15px;color:#ffffff;transform:scaleX(1.0160);">7/8/2021</div>
<svg style="left:1867px;top:1044px" width="36" height="34" viewBox="0 0 36 34"><rect x="1.8" y="0.8" width="20.3" height="17.2" fill="#fff"/><g fill="#222"><rect x="6" y="4.3" width="12" height="1.3"/><rect x="6" y="8.4" width="12" height="1.3"/><rect x="6" y="12.5" width="12" height="1.3"/></g><circle cx="21.4" cy="20.4" r="11.6" fill="#272c2c" stroke="#7a7a7a" stroke-width="1.4"/></svg>
<div class="t" style="left:1879.61px;top:1057.27px;font-size:14.8px;color:#ffffff;transform:scaleX(1.0208);-webkit-text-stroke:0.3px #fff;">23</div>
<div class="a" style="left:1914px;top:1030px;width:1px;height:50px;background:#5a5f5f;"></div>
</body></html>
